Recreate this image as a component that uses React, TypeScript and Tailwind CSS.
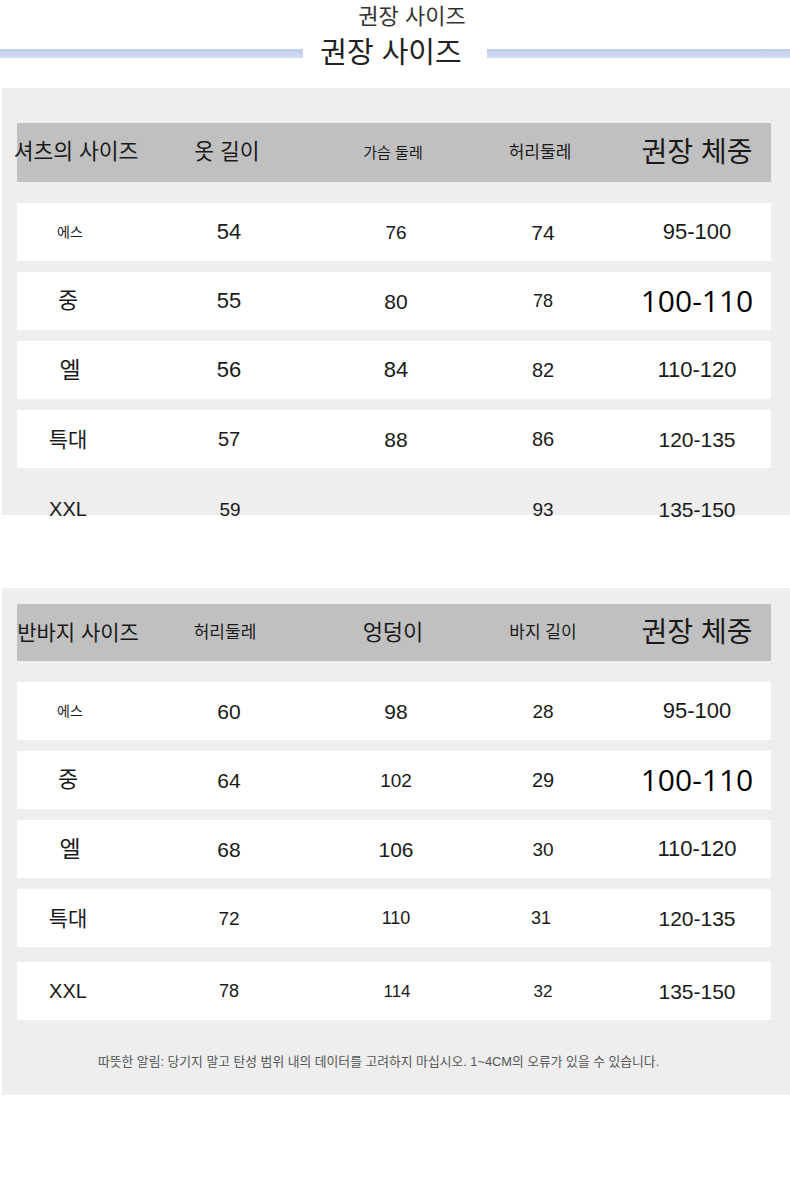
import React from "react";

type Cell = { t: string; c: string };

const F = "font-['Liberation_Sans','Noto_Sans_CJK_KR',sans-serif]";
const BIG = "font-['Open_Sans','Noto_Sans_CJK_KR',sans-serif] text-[30px] text-black";

const shirtHeader: Cell[] = [
  { t: "셔츠의 사이즈", c: "text-[21.5px] pl-[16px]" },
  { t: "옷 길이", c: "text-[21.5px] pr-[4px]" },
  { t: "가슴 둘레", c: "text-[15px] pr-[6px]" },
  { t: "허리둘레", c: "text-[17px] pr-[6px]" },
  { t: "권장 체중", c: "text-[28px]" },
];

const shirtRows: Cell[][] = [
  [
    { t: "에스", c: "text-[14px] pl-[4px]" },
    { t: "54", c: "text-[22px]" },
    { t: "76", c: "text-[19px]" },
    { t: "74", c: "text-[21px]" },
    { t: "95-100", c: "text-[22px]" },
  ],
  [
    { t: "중", c: "text-[22px]" },
    { t: "55", c: "text-[22px]" },
    { t: "80", c: "text-[21px]" },
    { t: "78", c: "text-[18px]" },
    { t: "100-110", c: BIG },
  ],
  [
    { t: "엘", c: "text-[23px] pl-[4px]" },
    { t: "56", c: "text-[22px]" },
    { t: "84", c: "text-[22px]" },
    { t: "82", c: "text-[20px]" },
    { t: "110-120", c: "text-[22px]" },
  ],
  [
    { t: "특대", c: "text-[21px]" },
    { t: "57", c: "text-[20px]" },
    { t: "88", c: "text-[21px]" },
    { t: "86", c: "text-[20px]" },
    { t: "120-135", c: "text-[21px]" },
  ],
];

const shirtLast: Cell[] = [
  { t: "XXL", c: "text-[20px]" },
  { t: "59", c: "text-[19px] pl-[2px]" },
  { t: "", c: "text-[19px]" },
  { t: "93", c: "text-[19px]" },
  { t: "135-150", c: "text-[21px]" },
];

const pantsHeader: Cell[] = [
  { t: "반바지 사이즈", c: "text-[21px] pl-[20px]" },
  { t: "허리둘레", c: "text-[17px] pr-[8px]" },
  { t: "엉덩이", c: "text-[22px] pr-[6px]" },
  { t: "바지 길이", c: "text-[17px]" },
  { t: "권장 체중", c: "text-[28px]" },
];

const pantsRows: Cell[][] = [
  [
    { t: "에스", c: "text-[14px] pl-[4px]" },
    { t: "60", c: "text-[21px]" },
    { t: "98", c: "text-[21px]" },
    { t: "28", c: "text-[19px]" },
    { t: "95-100", c: "text-[22px]" },
  ],
  [
    { t: "중", c: "text-[22px]" },
    { t: "64", c: "text-[21px]" },
    { t: "102", c: "text-[19px]" },
    { t: "29", c: "text-[20px]" },
    { t: "100-110", c: BIG },
  ],
  [
    { t: "엘", c: "text-[23px] pl-[4px]" },
    { t: "68", c: "text-[21px]" },
    { t: "106", c: "text-[21px]" },
    { t: "30", c: "text-[19px]" },
    { t: "110-120", c: "text-[22px]" },
  ],
  [
    { t: "특대", c: "text-[21px]" },
    { t: "72", c: "text-[19px]" },
    { t: "110", c: "text-[18px]" },
    { t: "31", c: "text-[18px] pr-[4px]" },
    { t: "120-135", c: "text-[21px]" },
  ],
  [
    { t: "XXL", c: "text-[20px]" },
    { t: "78", c: "text-[18px]" },
    { t: "114", c: "text-[17px] pl-[2px]" },
    { t: "32", c: "text-[17px]" },
    { t: "135-150", c: "text-[21px]" },
  ],
];

function Row({ cells, className }: { cells: Cell[]; className: string }) {
  return (
    <div
      className={`shrink-0 ml-[15px] w-[754px] grid grid-cols-[102px_220px_114px_180px_128px] ${className}`}
    >
      {cells.map((cell, i) => (
        <div
          key={i}
          className={`flex items-center justify-center whitespace-nowrap leading-none text-[#1a1a1a] ${cell.c}`}
        >
          {cell.t}
        </div>
      ))}
    </div>
  );
}

export default function App() {
  return (
    <div className={`w-[790px] h-[1200px] bg-white ${F}`}>
      {/* titles */}
      <div className="h-[33px] flex flex-col items-center justify-center">
        <div className="text-[22px] leading-none text-[#333] pl-[34px] pt-[1px]">
          권장 사이즈
        </div>
      </div>
      <div className="h-[40px] flex items-center">
        <div className="w-[303px] h-[9px] bg-gradient-to-b from-[#bdcdee] to-[#d3def4]" />
        <div className="flex-1 flex justify-center pr-[8px]">
          <span className="text-[29px] leading-none text-[#222]">권장 사이즈</span>
        </div>
        <div className="w-[303px] h-[9px] bg-gradient-to-b from-[#bdcdee] to-[#d3def4]" />
      </div>

      {/* shirt panel */}
      <div className="mt-[15px] ml-[2px] h-[427px] bg-[#eeeeee] pt-[35px] flex flex-col">
        <Row cells={shirtHeader} className="h-[59px] bg-[#c0c0c0]" />
        <div className="shrink-0 mt-[21px] flex flex-col gap-[11px]">
          {shirtRows.map((r, i) => (
            <Row key={i} cells={r} className="h-[58px] bg-white" />
          ))}
          <Row cells={shirtLast} className="h-[58px] mt-px" />
        </div>
      </div>

      {/* pants panel */}
      <div className="mt-[73px] ml-[2px] h-[507px] bg-[#eeeeee] pt-[16px] flex flex-col">
        <Row cells={pantsHeader} className="h-[57px] bg-[#c0c0c0]" />
        <div className="shrink-0 mt-[21px] flex flex-col gap-[11px]">
          {pantsRows.map((r, i) => (
            <Row
              key={i}
              cells={r}
              className={`h-[58px] bg-white ${i === 4 ? "mt-[4px]" : ""}`}
            />
          ))}
        </div>
        <div className="shrink-0 pt-[36px] pl-[96px] text-[12.8px] leading-none text-[#555] whitespace-nowrap">
          따뜻한 알림: 당기지 말고 탄성 범위 내의 데이터를 고려하지 마십시오. 1~4CM의 오류가 있을 수 있습니다.
        </div>
      </div>
    </div>
  );
}
